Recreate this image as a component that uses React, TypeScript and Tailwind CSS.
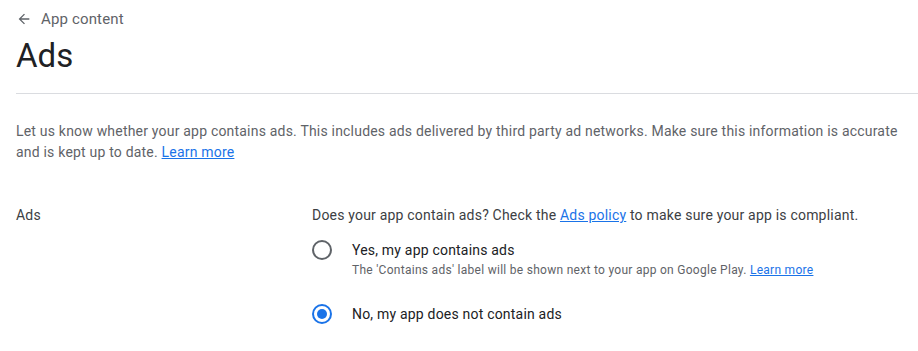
import React from "react";

function Radio({ checked }: { checked: boolean }) {
  return (
    <svg width="20" height="20" viewBox="0 0 20 20" className="shrink-0">
      <circle cx="10" cy="10" r="9" fill="none" stroke={checked ? "#1a73e8" : "#5f6368"} strokeWidth="2" />
      {checked && <circle cx="10" cy="10" r="5" fill="#1a73e8" />}
    </svg>
  );
}

export default function App() {
  return (
    <div className="w-[918px] h-[351px] bg-white overflow-hidden pl-4 font-['Roboto',sans-serif] tracking-[0.2px]">
      <div className="flex items-center h-[20px] mt-[9px] text-[#5f6368]">
        <svg width="16" height="16" viewBox="0 0 24 24">
          <path d="M20 11H7.83l5.59-5.59L12 4l-8 8 8 8 1.41-1.41L7.83 13H20v-2z" fill="#5f6368" />
        </svg>
        <span className="ml-[9px] text-[15px] tracking-[0.15px] text-[#5f6368]">App content</span>
      </div>
      <h1 className="text-[33px] leading-[40px] mt-[7px] text-[#202124] font-normal tracking-normal">Ads</h1>
      <div className="h-px bg-[#dadce0] mt-[17px]" />
      <p className="mt-[27px] text-[14px] leading-[21px] text-[#5f6368] pr-[10px]">
        Let us know whether your app contains ads. This includes ads delivered by third party ad networks. Make sure this information is accurate and is kept up to date.{" "}
        <a className="text-[#1a73e8] underline">Learn more</a>
      </p>
      <div className="flex mt-[42px]">
        <div className="w-[296px] text-[14px] leading-[20px] text-[#3c4043]">Ads</div>
        <div className="flex flex-col">
          <div className="text-[14px] leading-[20px] text-[#3c4043]">
            Does your app contain ads? Check the <a className="text-[#1a73e8] underline">Ads policy</a> to make sure your app is compliant.
          </div>
          <div className="flex items-start mt-[15px]">
            <Radio checked={false} />
            <div className="ml-[20px]">
              <div className="text-[14px] leading-[20px] text-[#202124]">Yes, my app contains ads</div>
              <div className="text-[12px] leading-[16px] mt-[2px] text-[#5f6368] tracking-[0.28px]">
                The 'Contains ads' label will be shown next to your app on Google Play.{" "}
                <a className="text-[#1a73e8] underline">Learn more</a>
              </div>
            </div>
          </div>
          <div className="flex items-start mt-[26px]">
            <Radio checked={true} />
            <div className="ml-[20px] text-[14px] leading-[20px] text-[#202124]">No, my app does not contain ads</div>
          </div>
        </div>
      </div>
    </div>
  );
}
